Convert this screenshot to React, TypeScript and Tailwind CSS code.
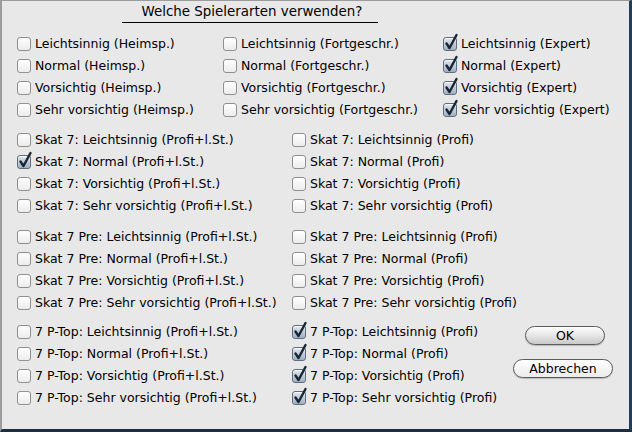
import React from 'react';

type Item = { label: string; checked?: boolean };

function Box({ checked }: { checked?: boolean }) {
  return (
    <span
      className={
        'relative mr-[4px] inline-block h-[14px] w-[14px] shrink-0 rounded-[3px] border shadow-[inset_0_1px_1px_rgba(255,255,255,0.9)] ' +
        (checked
          ? 'border-[#5f6d7c] bg-gradient-to-b from-[#dfe6ee] to-[#9fb0c3]'
          : 'border-[#8f8f8f] bg-gradient-to-b from-[#ffffff] to-[#ececec]')
      }
    >
      {checked && (
        <svg className="absolute -top-[4px] left-[1px] overflow-visible" width="13" height="16" viewBox="0 0 13 16">
          <path d="M1.5 9.5 L4.5 14 L11.5 1" fill="none" stroke="#1b2633" strokeWidth="2.4" strokeLinecap="round" strokeLinejoin="round" />
        </svg>
      )}
    </span>
  );
}

function Check({ label, checked }: Item) {
  return (
    <div className="flex h-[22px] items-center whitespace-nowrap text-[12.5px] text-black">
      <Box checked={checked} />
      <span>{label}</span>
    </div>
  );
}

const basic = ['Leichtsinnig', 'Normal', 'Vorsichtig', 'Sehr vorsichtig'];

function Column({ items, className }: { items: Item[]; className?: string }) {
  return (
    <div className={'flex flex-col ' + (className ?? '')}>
      {items.map((it) => (
        <Check key={it.label} {...it} />
      ))}
    </div>
  );
}

export default function App() {
  return (
    <div
      className="flex h-[432px] w-[632px] flex-col border-t border-l-2 border-r-[3px] border-b-[3px] border-t-[#9c9c9c] border-l-[#9c9c9c] border-r-[#253c58] border-b-[#1d2c3e] bg-[#e8e8e8]"
      style={{ fontFamily: '"DejaVu Sans", "Liberation Sans", sans-serif' }}
    >
      <div className="ml-[120px] mt-[2px] h-[20px] w-[256px] border-b border-black pl-[4px] text-center text-[13.4px] leading-[18px]">
        Welche Spielerarten verwenden?
      </div>

      <div className="mt-[10px] flex pl-[15px]">
        <Column className="w-[206px]" items={basic.map((b) => ({ label: `${b} (Heimsp.)` }))} />
        <Column className="w-[220px]" items={basic.map((b) => ({ label: `${b} (Fortgeschr.)` }))} />
        <Column items={basic.map((b) => ({ label: `${b} (Expert)`, checked: true }))} />
      </div>

      <div className="mt-[8px] flex pl-[15px]">
        <Column
          className="w-[275px]"
          items={basic.map((b) => ({ label: `Skat 7: ${b} (Profi+l.St.)`, checked: b === 'Normal' }))}
        />
        <Column items={basic.map((b) => ({ label: `Skat 7: ${b} (Profi)` }))} />
      </div>

      <div className="mt-[9px] flex pl-[15px]">
        <Column className="w-[275px]" items={basic.map((b) => ({ label: `Skat 7 Pre: ${b} (Profi+l.St.)` }))} />
        <Column items={basic.map((b) => ({ label: `Skat 7 Pre: ${b} (Profi)` }))} />
      </div>

      <div className="mt-[7px] flex pl-[15px]">
        <Column className="w-[275px]" items={basic.map((b) => ({ label: `7 P-Top: ${b} (Profi+l.St.)` }))} />
        <Column
          className="w-[221px]"
          items={basic.map((b) => ({ label: `7 P-Top: ${b} (Profi)`, checked: true }))}
        />
        <div className="flex flex-col items-center pt-[5px]">
          <button className="ml-[4px] h-[19px] w-[80px] rounded-full border border-[#5c5c5c] bg-gradient-to-b from-[#fdfdfd] via-[#e6e6e6] to-[#c9c9c9] text-[12.5px] leading-[16px] text-black shadow-[0_1px_1px_rgba(0,0,0,0.2)]">
            OK
          </button>
          <button className="mt-[14px] h-[19px] w-[100px] rounded-full border border-[#5c5c5c] bg-gradient-to-b from-[#ffffff] to-[#ececec] text-[12.5px] leading-[16px] text-black shadow-[0_1px_1px_rgba(0,0,0,0.2)]">
            Abbrechen
          </button>
        </div>
      </div>
    </div>
  );
}
